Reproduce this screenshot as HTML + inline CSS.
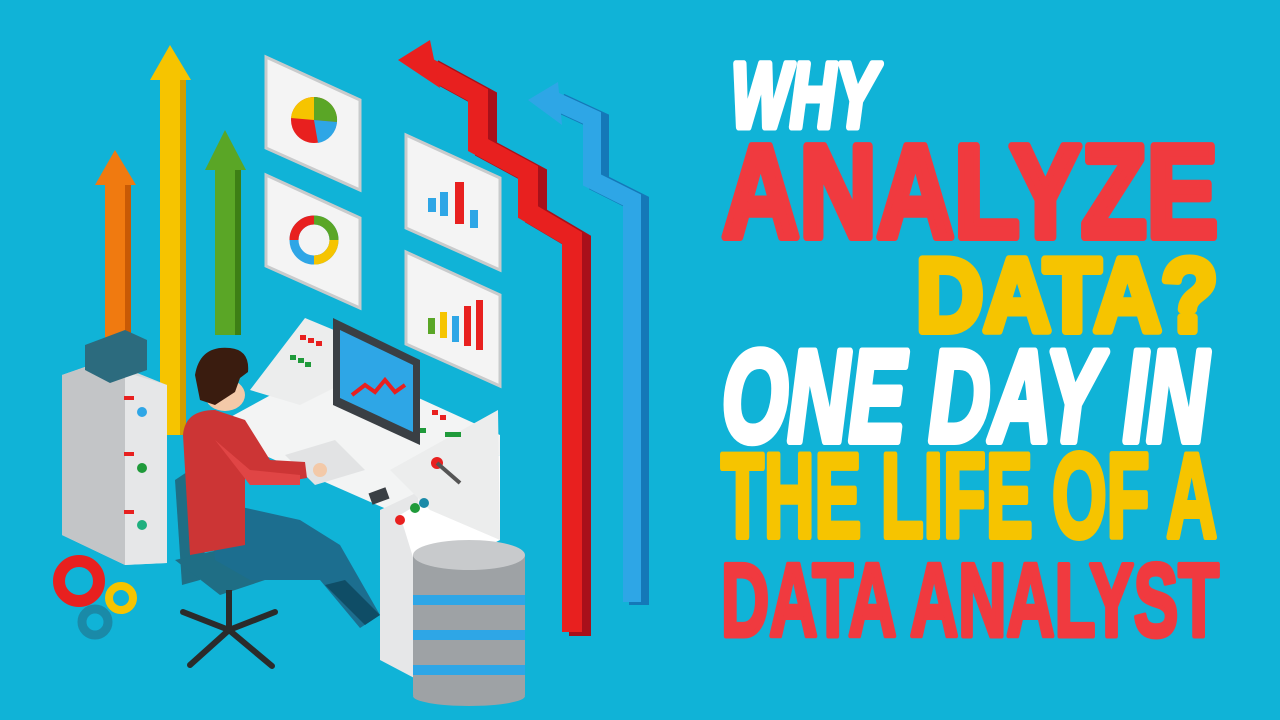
<!DOCTYPE html>
<html><head><meta charset="utf-8"><style>
html,body{margin:0;padding:0;width:1280px;height:720px;overflow:hidden;background:#10b3d7}
svg{display:block}
</style></head><body>
<svg width="1280" height="720" viewBox="0 0 1280 720" xmlns="http://www.w3.org/2000/svg">
<rect width="1280" height="720" fill="#10b3d7"/>
<g>
<rect x="105" y="180" width="20" height="160" fill="#f07a10"/><rect x="125" y="185" width="6" height="155" fill="#c85a05"/>
<polygon points="95,185 115,150 136,185" fill="#f07a10"/>
<rect x="160" y="75" width="20" height="360" fill="#f6c400"/><rect x="180" y="80" width="6" height="355" fill="#d39e00"/>
<polygon points="150,80 170,45 191,80" fill="#f6c400"/>
<rect x="215" y="165" width="20" height="170" fill="#5aa626"/><rect x="235" y="170" width="6" height="165" fill="#3d7f15"/>
<polygon points="205,170 225,130 246,170" fill="#5aa626"/>
</g>
<g fill="none" stroke-linejoin="miter">
<polyline points="425,66 478,95 478,145 528,172 528,212 572,238 572,632" stroke="#a8101a" stroke-width="22" transform="translate(8,4)"/>
<polyline points="425,66 478,95 478,145 528,172 528,212 572,238 572,632" stroke="#e8201f" stroke-width="20"/>
<polyline points="553,100 592,118 592,180 632,200 632,602" stroke="#1478b8" stroke-width="20" transform="translate(7,3)"/>
<polyline points="553,100 592,118 592,180 632,200 632,602" stroke="#2ea6e6" stroke-width="18"/>
</g>
<polygon points="398,60 430,40 440,88" fill="#e8201f"/>
<polygon points="528,100 558,82 562,125" fill="#2ea6e6"/>
<g stroke="#c9cbcc" stroke-width="3">
<polygon points="266,57 360,100 360,190 266,148" fill="#f4f4f4"/>
<polygon points="406,135 500,178 500,270 406,228" fill="#f4f4f4"/>
<polygon points="266,175 360,218 360,308 266,266" fill="#f4f4f4"/>
<polygon points="406,252 500,295 500,386 406,344" fill="#f4f4f4"/>
</g>
<circle cx="314" cy="120" r="23" fill="#e8201f"/>
<path d="M314 120 L314 97 A23 23 0 0 1 337 122 Z" fill="#5aa626"/>
<path d="M314 120 L337 122 A23 23 0 0 1 318 143 Z" fill="#2ea6e6"/>
<path d="M314 120 L291 118 A23 23 0 0 1 314 97 Z" fill="#f6c400"/>
<circle cx="314" cy="240" r="20" fill="none" stroke="#2ea6e6" stroke-width="9"/>
<path d="M314 220 A20 20 0 0 1 334 240" fill="none" stroke="#5aa626" stroke-width="9"/>
<path d="M334 240 A20 20 0 0 1 314 260" fill="none" stroke="#f6c400" stroke-width="9"/>
<path d="M294 240 A20 20 0 0 1 314 220" fill="none" stroke="#e8201f" stroke-width="9"/>
<g><rect x="428" y="198" width="8" height="14" fill="#2ea6e6"/><rect x="440" y="192" width="8" height="24" fill="#2ea6e6"/><rect x="455" y="182" width="9" height="42" fill="#e8201f"/><rect x="470" y="210" width="8" height="18" fill="#2ea6e6"/></g>
<g><rect x="428" y="318" width="7" height="16" fill="#5aa626"/><rect x="440" y="312" width="7" height="26" fill="#f6c400"/><rect x="452" y="316" width="7" height="26" fill="#2ea6e6"/><rect x="464" y="306" width="7" height="40" fill="#e8201f"/><rect x="476" y="300" width="7" height="50" fill="#e8201f"/></g>
<polygon points="62,375 105,360 167,385 167,563 125,565 62,535" fill="#d7d9da"/>
<polygon points="62,375 105,360 125,372 125,565 62,535" fill="#c3c5c7"/>
<polygon points="125,372 167,385 167,563 125,565" fill="#e6e7e8"/>
<polygon points="85,345 125,330 147,340 147,370 110,383 85,370" fill="#2c6b7e"/>
<circle cx="142" cy="412" r="5" fill="#2ea6e6"/><circle cx="142" cy="468" r="5" fill="#1f9a3a"/><circle cx="142" cy="525" r="5" fill="#1fb07f"/>
<rect x="124" y="396" width="10" height="4" fill="#e8201f"/><rect x="124" y="452" width="10" height="4" fill="#e8201f"/><rect x="124" y="510" width="10" height="4" fill="#e8201f"/>
<circle cx="79" cy="581" r="20" fill="none" stroke="#e8201f" stroke-width="12"/>
<circle cx="121" cy="598" r="12" fill="none" stroke="#f6c400" stroke-width="8"/>
<circle cx="95" cy="622" r="13" fill="none" stroke="#1a8aa8" stroke-width="9"/>
<polygon points="225,420 335,360 500,435 500,455 400,515 225,438" fill="#f3f4f4"/>
<polygon points="380,510 418,492 418,680 380,660" fill="#e6e7e8"/>
<polygon points="400,515 500,455 500,540 420,580" fill="#ffffff"/>
<polygon points="390,470 498,410 500,540 430,510" fill="#eceded"/>
<polygon points="250,390 305,318 370,345 370,370 300,405" fill="#eceded"/>
<polygon points="333,318 420,360 420,445 333,405" fill="#3a3f44"/>
<polygon points="340,330 413,365 413,432 340,398" fill="#2ea6e6"/>
<polyline points="352,395 365,385 375,392 385,380 395,392 405,385" stroke="#e8201f" stroke-width="4" fill="none"/>
<g fill="#e8201f"><rect x="300" y="335" width="6" height="5"/><rect x="308" y="338" width="6" height="5"/><rect x="316" y="341" width="6" height="5"/><rect x="432" y="410" width="6" height="5"/><rect x="440" y="415" width="6" height="5"/></g>
<g fill="#1f9a3a"><rect x="290" y="355" width="6" height="5"/><rect x="298" y="358" width="6" height="5"/><rect x="305" y="362" width="6" height="5"/><rect x="420" y="428" width="6" height="5"/><rect x="445" y="432" width="16" height="5"/></g>
<circle cx="437" cy="463" r="6" fill="#e8201f"/><line x1="437" y1="463" x2="460" y2="483" stroke="#555" stroke-width="4"/>
<circle cx="415" cy="508" r="5" fill="#1f9a3a"/><circle cx="424" cy="503" r="5" fill="#1a8aa8"/><circle cx="400" cy="520" r="5" fill="#e8201f"/>
<rect x="370" y="490" width="18" height="12" fill="#3a3f44" transform="rotate(-20 379 496)"/>
<polygon points="285,455 335,440 365,470 315,485" fill="#e2e3e4"/>
<polygon points="175,480 190,470 210,520 200,580 182,585" fill="#1f6e85"/>
<polygon points="175,560 240,545 280,575 220,595" fill="#1f6e85"/>
<rect x="226" y="590" width="6" height="40" fill="#2b2b2b"/>
<g stroke="#2b2b2b" stroke-width="6" stroke-linecap="round"><line x1="229" y1="630" x2="183" y2="612"/><line x1="229" y1="630" x2="275" y2="612"/><line x1="229" y1="630" x2="190" y2="665"/><line x1="229" y1="630" x2="272" y2="666"/><line x1="229" y1="630" x2="229" y2="600"/></g>
<path d="M210 500 L300 520 L340 545 L380 615 L360 628 L320 580 L250 580 L215 560 Z" fill="#1c6e8f"/>
<polygon points="325,585 345,580 380,615 365,625" fill="#0f4d66"/>
<path d="M183 435 Q185 410 215 410 L245 420 L270 460 L305 462 L307 478 L265 485 L245 470 L245 545 L190 555 Z" fill="#cc3535"/>
<path d="M215 440 L250 470 L300 475 L300 485 L250 485 Z" fill="#e04545"/>
<circle cx="320" cy="470" r="7" fill="#f3c9a8"/>
<ellipse cx="225" cy="395" rx="20" ry="16" fill="#f3c9a8"/>
<path d="M195 375 Q200 345 230 348 Q250 350 248 372 L240 378 L235 392 L215 405 L200 400 Z" fill="#3a1c0f"/>
<g>
<rect x="413" y="555" width="112" height="140" fill="#9ea2a5"/>
<rect x="413" y="595" width="112" height="10" fill="#2ea6e6"/><rect x="413" y="630" width="112" height="10" fill="#2ea6e6"/><rect x="413" y="665" width="112" height="10" fill="#2ea6e6"/>
<ellipse cx="469" cy="696" rx="56" ry="10" fill="#9ea2a5"/>
<ellipse cx="469" cy="555" rx="56" ry="15" fill="#c8cacc"/>
</g>
<g font-family="'Liberation Sans', sans-serif" font-weight="bold" stroke-linejoin="round">
<text x="731" y="127" font-size="92" fill="#ffffff" stroke="#ffffff" stroke-width="7" textLength="146" lengthAdjust="spacingAndGlyphs" font-style="italic">WHY</text>
<text x="722" y="237" font-size="132" fill="#f03a3f" stroke="#f03a3f" stroke-width="8" textLength="496" lengthAdjust="spacingAndGlyphs">ANALYZE</text>
<text x="916" y="331" font-size="104" fill="#f6c400" stroke="#f6c400" stroke-width="8" textLength="302" lengthAdjust="spacingAndGlyphs">DATA?</text>
<text x="722" y="441" font-size="130" fill="#ffffff" stroke="#ffffff" stroke-width="8" textLength="486" lengthAdjust="spacingAndGlyphs" font-style="italic">ONE DAY IN</text>
<text x="721" y="537" font-size="120" fill="#f6c400" stroke="#f6c400" stroke-width="6" textLength="496" lengthAdjust="spacingAndGlyphs">THE LIFE OF A</text>
<text x="721" y="636" font-size="104" fill="#f03a3f" stroke="#f03a3f" stroke-width="5" textLength="498" lengthAdjust="spacingAndGlyphs">DATA ANALYST</text>
</g>
</svg>
</body></html>
